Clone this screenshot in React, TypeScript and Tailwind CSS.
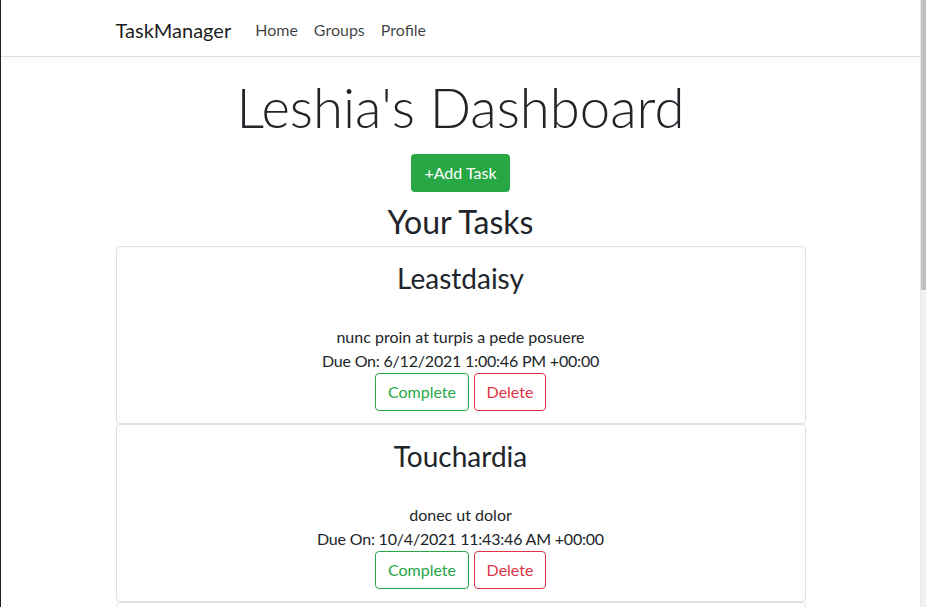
import React from 'react';

type Task = {
  title: string;
  description: string;
  due: string;
};

const tasks: Task[] = [
  { title: 'Leastdaisy', description: 'nunc proin at turpis a pede posuere', due: '6/12/2021 1:00:46 PM +00:00' },
  { title: 'Touchardia', description: 'donec ut dolor', due: '10/4/2021 11:43:46 AM +00:00' },
];

function Navbar() {
  return (
    <nav className="h-[57px] shrink-0 border-b border-[#dee2e6] bg-white shadow-[0_2px_8px_rgba(0,0,0,0.04)]">
      <div className="mx-auto flex h-full w-[690px] items-center pt-1">
        <span className="mr-4 text-[20px] leading-[30px] text-black/90">TaskManager</span>
        <a className="px-2 text-[16px] leading-6 text-black/75">Home</a>
        <a className="px-2 text-[16px] leading-6 text-black/75">Groups</a>
        <a className="px-2 text-[16px] leading-6 text-black/75">Profile</a>
      </div>
    </nav>
  );
}

function TaskCard({ task }: { task: Task }) {
  return (
    <div className="rounded-[4px] border border-[#dfdfdf] bg-white p-3 text-center">
      <h3 className="mt-[3px] mb-[29px] text-[28px] leading-[1.2]">{task.title}</h3>
      <p className="text-[16px] leading-6">{task.description}</p>
      <p className="text-[16px] leading-6 tracking-[-0.2px]">Due On: {task.due}</p>
      <div className="flex justify-center gap-[5px]">
        <button className="h-[38px] w-[94px] rounded-[4px] border border-[#28a745] text-[16px] text-[#28a745]">
          Complete
        </button>
        <button className="h-[38px] w-[72px] rounded-[4px] border border-[#dc3545] text-[16px] text-[#dc3545]">
          Delete
        </button>
      </div>
    </div>
  );
}

export default function App() {
  return (
    <div
      className="flex h-[607px] w-[926px] overflow-hidden bg-white text-[#212529]"
      style={{ fontFamily: 'Lato, "Noto Sans", sans-serif' }}
    >
      <div className="w-px shrink-0 bg-[#202020]" />
      <div className="flex min-w-0 flex-1 flex-col overflow-hidden">
        <Navbar />
        <main className="mx-auto flex w-[690px] flex-col items-center">
          <h1 className="mt-[18px] h-[65px] text-[54.5px] font-light leading-[1.2]">Leshia's Dashboard</h1>
          <button className="mt-[14px] h-[38px] w-[99px] rounded-[4px] bg-[#28a745] text-[16px] text-white">
            +Add Task
          </button>
          <h2 className="mt-[11px] text-[32px] leading-[1.2]">Your Tasks</h2>
          <div className="mt-[5px] flex w-full flex-col">
            {tasks.map((t) => (
              <TaskCard key={t.title} task={t} />
            ))}
            <div className="h-[120px] rounded-[4px] border border-[#dfdfdf] bg-white" />
          </div>
        </main>
      </div>
      <div className="flex w-[6px] shrink-0 flex-col border-l border-[#e8e8e8] bg-[#f1f1f1]">
        <div className="h-[290px] bg-[#c1c1c1]" />
      </div>
    </div>
  );
}
